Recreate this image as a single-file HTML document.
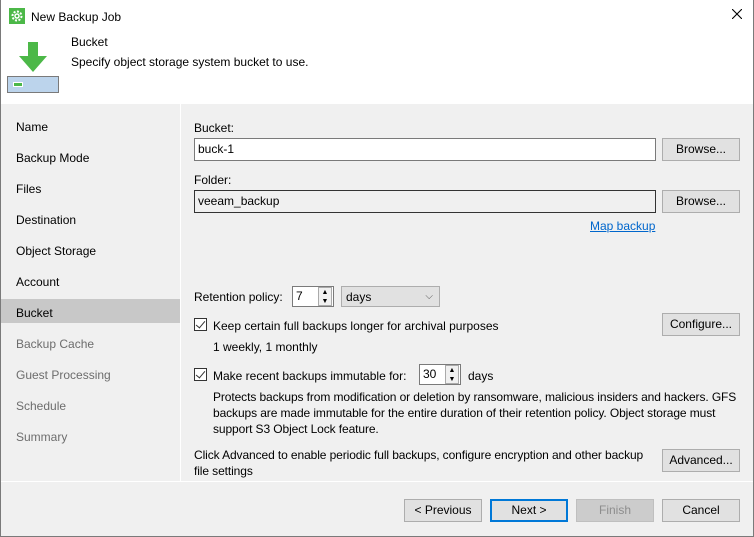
<!DOCTYPE html>
<html><head><style>
*{box-sizing:border-box;margin:0;padding:0}
body{width:754px;height:537px;overflow:hidden;background:#f0f0f0;font-family:"Liberation Sans",sans-serif;font-size:12px;color:#000;position:relative}
.a{position:absolute;white-space:nowrap}
.win{position:absolute;left:0;top:0;width:754px;height:537px;border:1px solid #7a7a7a;border-top:none}
.btn{position:absolute;background:#e1e1e1;border:1px solid #adadad;text-align:center;line-height:21px;height:23px}
.inp{position:absolute;height:23px;background:#fff;border:1px solid #7a7a7a;padding-left:3px;line-height:21px}
.cb{position:absolute;width:13px;height:13px;border:1px solid #333;background:#fff}
.cb:after{content:"";position:absolute;left:3px;top:0px;width:4px;height:8px;border:solid #333;border-width:0 1.5px 1.5px 0;transform:rotate(40deg)}
.nav{position:absolute;left:16px}
.dis{color:#6d6d6d}
</style></head><body>
<div class="a" style="left:0;top:0;width:754px;height:104px;background:#fff"></div>
<div class="win"></div>
<svg class="a" style="left:9px;top:8px" width="16" height="16"><rect width="16" height="16" fill="#4cb848"/><circle cx="8" cy="8" r="4.5" fill="none" stroke="#fff" stroke-width="2" stroke-dasharray="2 1.5"/><circle cx="8" cy="8" r="2" fill="none" stroke="#fff" stroke-width="1.5"/></svg>
<div class="a" style="left:31px;top:10px;font-size:12px">New Backup Job</div>
<svg class="a" style="left:732px;top:9px" width="10" height="10"><path d="M0 0L10 10M10 0L0 10" stroke="#000" stroke-width="1.1"/></svg>
<svg class="a" style="left:18px;top:42px" width="30" height="30"><path d="M10 0h10v14h9L15 30 1 14h9z" fill="#4cb848"/></svg>
<div class="a" style="left:7px;top:76px;width:52px;height:17px;border:1px solid #7a7a7a;background:#bcd4ec"></div>
<div class="a" style="left:13px;top:82px;width:10px;height:5px;background:#4cb848;border:1px solid #fff"></div>
<div class="a" style="left:71px;top:35px">Bucket</div>
<div class="a" style="left:71px;top:55px">Specify object storage system bucket to use.</div>
<div class="a" style="left:180px;top:104px;width:1px;height:377px;background:#fff"></div>
<div class="a" style="left:1px;top:481px;width:752px;height:1px;background:#fff"></div>
<div class="nav a" style="top:120px">Name</div>
<div class="nav a" style="top:151px">Backup Mode</div>
<div class="nav a" style="top:182px">Files</div>
<div class="nav a" style="top:213px">Destination</div>
<div class="nav a" style="top:244px">Object Storage</div>
<div class="nav a" style="top:275px">Account</div>
<div class="a" style="left:1px;top:299px;width:179px;height:24px;background:#c8c8c8"></div>
<div class="nav a" style="top:306px">Bucket</div>
<div class="nav a dis" style="top:337px">Backup Cache</div>
<div class="nav a dis" style="top:368px">Guest Processing</div>
<div class="nav a dis" style="top:399px">Schedule</div>
<div class="nav a dis" style="top:430px">Summary</div>

<div class="a" style="left:194px;top:121px">Bucket:</div>
<div class="inp" style="left:194px;top:138px;width:462px">buck-1</div>
<div class="btn" style="left:662px;top:138px;width:78px">Browse...</div>
<div class="a" style="left:194px;top:173px">Folder:</div>
<div class="inp" style="left:194px;top:190px;width:462px;background:#f0f0f0;border-color:#333">veeam_backup</div>
<div class="btn" style="left:662px;top:190px;width:78px">Browse...</div>
<div class="a" style="left:590px;top:219px;color:#0066cc;text-decoration:underline">Map backup</div>

<div class="a" style="left:194px;top:290px">Retention policy:</div>
<div class="inp" style="left:292px;top:286px;width:42px;height:21px;line-height:18px">7</div>
<div class="a" style="left:318px;top:287px;width:14px;height:19px;background:#f0f0f0;border:1px solid #aaa;font-size:7px;line-height:9px;text-align:center">▲<br>▼</div>
<div class="a" style="left:341px;top:286px;width:99px;height:21px;background:#e1e1e1;border:1px solid #adadad;padding-left:4px;line-height:20px">days<span style="position:absolute;right:6px;top:0;font-size:10px;color:#555">⌵</span></div>

<div class="cb" style="left:194px;top:318px"></div>
<div class="a" style="left:213px;top:319px">Keep certain full backups longer for archival purposes</div>
<div class="btn" style="left:662px;top:313px;width:78px">Configure...</div>
<div class="a" style="left:213px;top:340px">1 weekly, 1 monthly</div>

<div class="cb" style="left:194px;top:368px"></div>
<div class="a" style="left:213px;top:369px">Make recent backups immutable for:</div>
<div class="inp" style="left:419px;top:364px;width:42px;height:21px;line-height:18px">30</div>
<div class="a" style="left:445px;top:365px;width:14px;height:19px;background:#f0f0f0;border:1px solid #aaa;font-size:7px;line-height:9px;text-align:center">▲<br>▼</div>
<div class="a" style="left:468px;top:369px">days</div>
<div class="a" style="left:213px;top:389px;line-height:16px;white-space:normal;width:540px;letter-spacing:-0.1px">Protects backups from modification or deletion by ransomware, malicious insiders and hackers. GFS backups are made immutable for the entire duration of their retention policy. Object storage must support S3 Object Lock feature.</div>

<div class="a" style="left:194px;top:447px;line-height:16px;white-space:normal;width:465px;letter-spacing:-0.1px">Click Advanced to enable periodic full backups, configure encryption and other backup file settings</div>
<div class="btn" style="left:662px;top:449px;width:78px">Advanced...</div>

<div class="btn" style="left:404px;top:499px;width:78px">&lt; Previous</div>
<div class="btn" style="left:490px;top:499px;width:78px;border:2px solid #0078d7;line-height:19px">Next &gt;</div>
<div class="btn" style="left:576px;top:499px;width:78px;background:#ccc;border-color:#bfbfbf;color:#8d8d8d">Finish</div>
<div class="btn" style="left:662px;top:499px;width:78px">Cancel</div>
</body></html>
